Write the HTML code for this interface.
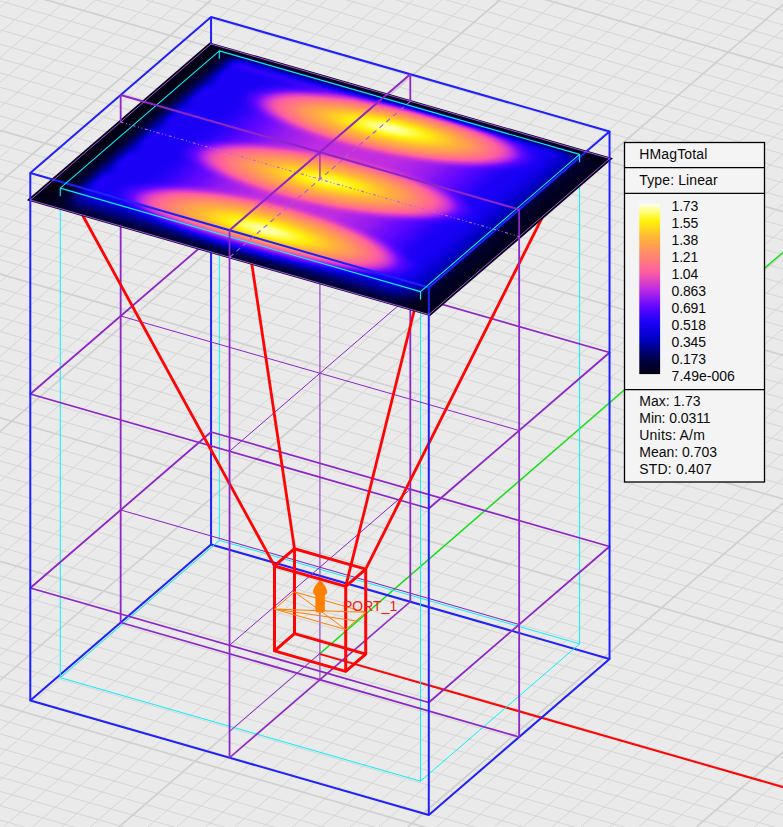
<!DOCTYPE html>
<html lang="en"><head><meta charset="utf-8"><title>HMagTotal field plot</title>
<style>html,body{margin:0;padding:0;background:#eaeaea;overflow:hidden}svg{display:block}text{font-family:"Liberation Sans",Arial,sans-serif}</style></head><body>
<svg width="783" height="827" viewBox="0 0 783 827">
<defs>
<radialGradient id="gl" cx="0.5" cy="0.5" r="0.5"><stop offset="0" stop-color="#fff" stop-opacity="1"/><stop offset="0.13" stop-color="#fff" stop-opacity="0.9"/><stop offset="0.26" stop-color="#fff" stop-opacity="0.77"/><stop offset="0.41" stop-color="#fff" stop-opacity="0.62"/><stop offset="0.56" stop-color="#fff" stop-opacity="0.47"/><stop offset="0.7" stop-color="#fff" stop-opacity="0.31"/><stop offset="0.78" stop-color="#fff" stop-opacity="0.13"/><stop offset="0.85" stop-color="#fff" stop-opacity="0.03"/><stop offset="0.9" stop-color="#fff" stop-opacity="0"/><stop offset="1" stop-color="#fff" stop-opacity="0"/></radialGradient>
<linearGradient id="eL" x1="0" y1="0" x2="1" y2="0"><stop offset="0" stop-color="#000" stop-opacity="1"/><stop offset="0.4" stop-color="#000" stop-opacity="1"/><stop offset="0.54" stop-color="#000" stop-opacity="0.86"/><stop offset="0.67" stop-color="#000" stop-opacity="0.66"/><stop offset="0.79" stop-color="#000" stop-opacity="0.4"/><stop offset="0.9" stop-color="#000" stop-opacity="0.16"/><stop offset="0.97" stop-color="#000" stop-opacity="0.04"/><stop offset="1" stop-color="#000" stop-opacity="0"/></linearGradient>
<linearGradient id="eR" x1="1" y1="0" x2="0" y2="0"><stop offset="0" stop-color="#000" stop-opacity="1"/><stop offset="0.14" stop-color="#000" stop-opacity="1"/><stop offset="0.22" stop-color="#000" stop-opacity="0.92"/><stop offset="0.34" stop-color="#000" stop-opacity="0.87"/><stop offset="0.45" stop-color="#000" stop-opacity="0.8"/><stop offset="0.5" stop-color="#000" stop-opacity="0.55"/><stop offset="0.55" stop-color="#000" stop-opacity="0.4"/><stop offset="0.66" stop-color="#000" stop-opacity="0.3"/><stop offset="0.75" stop-color="#000" stop-opacity="0.17"/><stop offset="0.87" stop-color="#000" stop-opacity="0.05"/><stop offset="1" stop-color="#000" stop-opacity="0"/></linearGradient>
<linearGradient id="eF" x1="0" y1="0" x2="0" y2="1"><stop offset="0" stop-color="#000" stop-opacity="1"/><stop offset="0.1" stop-color="#000" stop-opacity="1"/><stop offset="0.15" stop-color="#000" stop-opacity="0.84"/><stop offset="0.25" stop-color="#000" stop-opacity="0.72"/><stop offset="0.38" stop-color="#000" stop-opacity="0.59"/><stop offset="0.5" stop-color="#000" stop-opacity="0.46"/><stop offset="0.62" stop-color="#000" stop-opacity="0.33"/><stop offset="0.74" stop-color="#000" stop-opacity="0.2"/><stop offset="0.87" stop-color="#000" stop-opacity="0.06"/><stop offset="1" stop-color="#000" stop-opacity="0"/></linearGradient>
<linearGradient id="eB" x1="0" y1="1" x2="0" y2="0"><stop offset="0" stop-color="#000" stop-opacity="1"/><stop offset="0.38" stop-color="#000" stop-opacity="1"/><stop offset="0.51" stop-color="#000" stop-opacity="0.6"/><stop offset="0.64" stop-color="#000" stop-opacity="0.15"/><stop offset="0.83" stop-color="#000" stop-opacity="0"/><stop offset="1" stop-color="#000" stop-opacity="0"/></linearGradient>
<radialGradient id="gs" cx="0.5" cy="0.5" r="0.5"><stop offset="0" stop-color="#fff" stop-opacity="1"/><stop offset="0.5" stop-color="#fff" stop-opacity="0.6"/><stop offset="1" stop-color="#fff" stop-opacity="0"/></radialGradient>
<linearGradient id="gF" gradientUnits="userSpaceOnUse" x1="0" y1="0" x2="1" y2="0"><stop offset="0.17" stop-color="#fff" stop-opacity="0"/><stop offset="0.21" stop-color="#fff" stop-opacity="0.04"/><stop offset="0.26" stop-color="#fff" stop-opacity="0.13"/><stop offset="0.33" stop-color="#fff" stop-opacity="0.22"/><stop offset="0.41" stop-color="#fff" stop-opacity="0.28"/><stop offset="0.51" stop-color="#fff" stop-opacity="0.3"/><stop offset="0.61" stop-color="#fff" stop-opacity="0.28"/><stop offset="0.69" stop-color="#fff" stop-opacity="0.22"/><stop offset="0.76" stop-color="#fff" stop-opacity="0.13"/><stop offset="0.81" stop-color="#fff" stop-opacity="0.04"/><stop offset="0.84" stop-color="#fff" stop-opacity="0"/></linearGradient>
<linearGradient id="gm" gradientUnits="userSpaceOnUse" x1="0" y1="0" x2="0" y2="1"><stop offset="0" stop-color="#fff" stop-opacity="0"/><stop offset="0.09" stop-color="#fff" stop-opacity="0"/><stop offset="0.13" stop-color="#fff" stop-opacity="0.5"/><stop offset="0.17" stop-color="#fff" stop-opacity="1"/><stop offset="0.84" stop-color="#fff" stop-opacity="1"/><stop offset="0.9" stop-color="#fff" stop-opacity="0.6"/><stop offset="0.98" stop-color="#fff" stop-opacity="0"/><stop offset="1" stop-color="#fff" stop-opacity="0"/></linearGradient>
<mask id="mv" maskUnits="userSpaceOnUse" maskContentUnits="userSpaceOnUse" x="-0.2" y="-0.2" width="1.4" height="1.4"><rect x="-0.2" y="-0.2" width="1.4" height="1.4" fill="url(#gm)"/></mask>
<filter id="cm" x="-5%" y="-5%" width="110%" height="110%" color-interpolation-filters="sRGB"><feGaussianBlur stdDeviation="2.2"/><feComponentTransfer><feFuncR type="table" tableValues="0.008 0.005 0.003 0.000 0.000 0.000 0.000 0.000 0.000 0.000 0.000 0.000 0.000 0.003 0.018 0.032 0.047 0.062 0.076 0.091 0.131 0.178 0.225 0.271 0.318 0.364 0.415 0.471 0.527 0.584 0.640 0.697 0.753 0.792 0.830 0.869 0.907 0.946 0.985 1.000 1.000 1.000 1.000 1.000 1.000 1.000 1.000 1.000 1.000 1.000 1.000 1.000 1.000 1.000 1.000 1.000 1.000 1.000 1.000 1.000 1.000 1.000 1.000 1.000 1.000"/><feFuncG type="table" tableValues="0.000 0.000 0.000 0.000 0.000 0.000 0.000 0.000 0.000 0.000 0.000 0.000 0.000 0.000 0.000 0.000 0.000 0.000 0.000 0.000 0.004 0.009 0.014 0.019 0.024 0.028 0.040 0.062 0.084 0.106 0.128 0.150 0.173 0.203 0.234 0.264 0.295 0.326 0.356 0.384 0.410 0.436 0.461 0.487 0.513 0.539 0.566 0.593 0.620 0.647 0.674 0.700 0.736 0.774 0.812 0.850 0.888 0.926 0.955 0.971 0.987 1.000 1.000 1.000 1.000"/><feFuncB type="table" tableValues="0.078 0.108 0.137 0.167 0.212 0.261 0.310 0.369 0.435 0.501 0.568 0.634 0.700 0.760 0.793 0.826 0.859 0.892 0.925 0.958 0.969 0.975 0.980 0.986 0.991 0.997 0.993 0.975 0.957 0.940 0.922 0.904 0.886 0.846 0.805 0.765 0.725 0.684 0.644 0.608 0.576 0.545 0.513 0.481 0.449 0.417 0.387 0.356 0.325 0.295 0.264 0.234 0.204 0.175 0.145 0.116 0.086 0.057 0.088 0.211 0.333 0.464 0.625 0.787 0.949"/><feFuncA type="linear" slope="0" intercept="1"/></feComponentTransfer></filter>
<clipPath id="pc"><path d="M26.82 200.25L430.11 316.12L613.03 158.25L209.74 42.38Z"/></clipPath>
<linearGradient id="cb" x1="0" y1="0" x2="0" y2="1"><stop offset="0" stop-color="rgb(255,255,242)"/><stop offset="0.05" stop-color="rgb(255,255,110)"/><stop offset="0.1" stop-color="rgb(255,242,10)"/><stop offset="0.2" stop-color="rgb(255,180,58)"/><stop offset="0.3" stop-color="rgb(255,136,108)"/><stop offset="0.4" stop-color="rgb(255,94,160)"/><stop offset="0.5" stop-color="rgb(192,44,226)"/><stop offset="0.6" stop-color="rgb(100,8,255)"/><stop offset="0.7" stop-color="rgb(24,0,246)"/><stop offset="0.8" stop-color="rgb(0,0,192)"/><stop offset="0.9" stop-color="rgb(0,0,84)"/><stop offset="0.95" stop-color="rgb(0,0,44)"/><stop offset="1" stop-color="rgb(2,0,20)"/></linearGradient>
</defs>
<rect width="783" height="827" fill="#eaeaea"/>
<path d="M0 -214.54L783 10.41M0 -200.17L783 24.78M0 -185.8L783 39.15M0 -171.43L783 53.52M0 -142.69L783 82.26M0 -128.32L783 96.63M0 -113.95L783 111M0 -99.58L783 125.37M0 -85.21L783 139.74M0 -70.84L783 154.11M0 -56.47L783 168.48M0 -42.1L783 182.85M0 -27.73L783 197.22M0 1.01L783 225.96M0 15.38L783 240.33M0 29.75L783 254.7M0 44.12L783 269.07M0 58.49L783 283.44M0 72.86L783 297.81M0 87.23L783 312.18M0 101.6L783 326.55M0 115.97L783 340.92M0 144.71L783 369.66M0 159.08L783 384.03M0 173.45L783 398.4M0 187.82L783 412.77M0 202.19L783 427.14M0 216.56L783 441.51M0 230.93L783 455.88M0 245.3L783 470.25M0 259.67L783 484.62M0 288.41L783 513.36M0 302.78L783 527.73M0 317.15L783 542.1M0 331.52L783 556.47M0 345.89L783 570.84M0 360.26L783 585.21M0 374.63L783 599.58M0 389L783 613.95M0 403.37L783 628.32M0 432.11L783 657.06M0 446.48L783 671.43M0 460.85L783 685.8M0 475.22L783 700.17M0 489.59L783 714.54M0 503.96L783 728.91M0 518.33L783 743.28M0 532.7L783 757.65M0 547.07L783 772.02M0 575.81L783 800.76M0 590.18L783 815.13M0 604.55L783 829.5M0 618.92L783 843.87M0 633.29L783 858.24M0 647.66L783 872.61M0 662.03L783 886.98M0 676.4L783 901.35M0 690.77L783 915.72M0 719.51L783 944.46M0 733.88L783 958.83M0 748.25L783 973.2M0 762.62L783 987.57M0 776.99L783 1001.94M0 791.36L783 1016.31M0 805.73L783 1030.68M0 820.1L783 1045.05M8.95 0L-949.23 827M37.82 0L-920.36 827M66.69 0L-891.49 827M95.56 0L-862.62 827M124.43 0L-833.75 827M153.3 0L-804.88 827M182.17 0L-776.01 827M239.91 0L-718.27 827M268.78 0L-689.4 827M297.65 0L-660.53 827M326.52 0L-631.66 827M355.39 0L-602.79 827M384.26 0L-573.92 827M413.13 0L-545.05 827M442 0L-516.18 827M470.87 0L-487.31 827M528.61 0L-429.57 827M557.48 0L-400.7 827M586.35 0L-371.83 827M615.22 0L-342.96 827M644.09 0L-314.09 827M672.96 0L-285.22 827M701.83 0L-256.35 827M730.7 0L-227.48 827M759.57 0L-198.61 827M817.31 0L-140.87 827M846.18 0L-112 827M875.05 0L-83.13 827M903.92 0L-54.26 827M932.79 0L-25.39 827M961.66 0L3.48 827M990.53 0L32.35 827M1019.4 0L61.22 827M1048.27 0L90.09 827M1106.01 0L147.83 827M1134.88 0L176.7 827M1163.75 0L205.57 827M1192.62 0L234.44 827M1221.49 0L263.31 827M1250.36 0L292.18 827M1279.23 0L321.05 827M1308.1 0L349.92 827M1336.97 0L378.79 827M1394.71 0L436.53 827M1423.58 0L465.4 827M1452.45 0L494.27 827M1481.32 0L523.14 827M1510.19 0L552.01 827M1539.06 0L580.88 827M1567.93 0L609.75 827M1596.8 0L638.62 827M1625.67 0L667.49 827M1683.41 0L725.23 827M1712.28 0L754.1 827M1741.15 0L782.97 827" stroke="#d6d6d6" stroke-width="1" fill="none"/>
<path d="M0 -157.06L783 67.89M0 -13.36L783 211.59M0 130.34L783 355.29M0 274.04L783 498.99M0 417.74L783 642.69M0 561.44L783 786.39M0 705.14L783 930.09M211.04 0L-747.14 827M499.74 0L-458.44 827M788.44 0L-169.74 827M1077.14 0L118.96 827M1365.84 0L407.66 827M1654.54 0L696.36 827" stroke="#d0d0d0" stroke-width="1.7" fill="none"/>
<path d="M320.1 653.4L788 247.94" stroke="#04e604" stroke-width="1.3" fill="none"/>
<path d="M320.1 654.1L788 788.53" stroke="#ff0404" stroke-width="2" fill="none"/>
<path d="M30.3 700.5L428.8 815L609.55 659L211.05 544.5Z" stroke="#2020fa" stroke-width="2" fill="none" stroke-linejoin="round"/>
<path d="M211.05 44L211.05 544.5" stroke="#2020fa" stroke-width="2" fill="none" stroke-linejoin="round"/>
<path d="M60.27 677.64L420.52 781.14L579.58 643.86L219.33 540.36Z" stroke="#04f2fc" stroke-width="1" fill="none" stroke-linejoin="round"/>
<path d="M60.27 196.14L60.27 677.64" stroke="#04f2fc" stroke-width="1" fill="none" stroke-linejoin="round"/>
<path d="M420.52 299.64L420.52 781.14" stroke="#04f2fc" stroke-width="1" fill="none" stroke-linejoin="round"/>
<path d="M579.58 162.36L579.58 643.86" stroke="#04f2fc" stroke-width="1" fill="none" stroke-linejoin="round"/>
<path d="M219.33 58.86L219.33 540.36" stroke="#04f2fc" stroke-width="1" fill="none" stroke-linejoin="round"/>
<path d="M30.3 394L428.8 508.5L609.55 352.5L211.05 238Z" stroke="#8c26c8" stroke-width="1.8" fill="none" stroke-linejoin="round"/>
<path d="M120.67 316L519.17 430.5" stroke="#8c26c8" stroke-width="1" fill="none" stroke-linejoin="round"/>
<path d="M229.55 451.25L410.3 295.25" stroke="#8c26c8" stroke-width="1" fill="none" stroke-linejoin="round"/>
<path d="M30.3 588L428.8 702.5L609.55 546.5L211.05 432Z" stroke="#8c26c8" stroke-width="1.8" fill="none" stroke-linejoin="round"/>
<path d="M120.67 510L519.17 624.5" stroke="#8c26c8" stroke-width="1" fill="none" stroke-linejoin="round"/>
<path d="M229.55 645.25L410.3 489.25" stroke="#8c26c8" stroke-width="1" fill="none" stroke-linejoin="round"/>
<path d="M120.67 622.5L519.17 737" stroke="#8c26c8" stroke-width="1.8" fill="none" stroke-linejoin="round"/>
<path d="M229.55 757.75L410.3 601.75" stroke="#8c26c8" stroke-width="1.6" fill="none" stroke-linejoin="round"/>
<path d="M229.55 731.45L319.93 653.45" stroke="#8c26c8" stroke-width="1" fill="none" stroke-linejoin="round"/>
<path d="M120.67 122L120.67 622.5" stroke="#8c26c8" stroke-width="1.8" fill="none" stroke-linejoin="round"/>
<path d="M410.3 101.25L410.3 601.75" stroke="#8c26c8" stroke-width="1.8" fill="none" stroke-linejoin="round"/>
<path d="M319.93 179.25L319.93 679.75" stroke="#8c26c8" stroke-width="1" fill="none" stroke-linejoin="round"/>
<path d="M274.49 650.92L345.71 671.39L365.71 654.14L294.49 633.68Z" stroke="#ff0404" stroke-width="3" fill="none" stroke-linejoin="round"/>
<path d="M274.49 565.94L345.71 586.4L365.71 569.16L294.49 548.69Z" stroke="#ff0404" stroke-width="3" fill="none" stroke-linejoin="round"/>
<path d="M274.49 650.92L274.49 565.94" stroke="#ff0404" stroke-width="3" fill="none" stroke-linejoin="round"/>
<path d="M345.71 671.39L345.71 586.4" stroke="#ff0404" stroke-width="3" fill="none" stroke-linejoin="round"/>
<path d="M365.71 654.14L365.71 569.16" stroke="#ff0404" stroke-width="3" fill="none" stroke-linejoin="round"/>
<path d="M294.49 633.68L294.49 548.69" stroke="#ff0404" stroke-width="3" fill="none" stroke-linejoin="round"/>
<path d="M274.49 565.94L74.26 199.99" stroke="#ff0404" stroke-width="2.8" fill="none" stroke-linejoin="round"/>
<path d="M345.71 586.4L417.19 298.52" stroke="#ff0404" stroke-width="2.8" fill="none" stroke-linejoin="round"/>
<path d="M365.71 569.16L565.94 170.23" stroke="#ff0404" stroke-width="2.8" fill="none" stroke-linejoin="round"/>
<path d="M294.49 548.69L223.01 71.71" stroke="#ff0404" stroke-width="2.8" fill="none" stroke-linejoin="round"/>
<path d="M74.26 199.99L417.19 298.52L565.94 170.23L223.01 71.71Z" stroke="#ff0404" stroke-width="2.6" fill="none" stroke-linejoin="round"/>
<path d="M274.49 609.08L345.71 629.55L365.71 612.3L294.49 591.83ZM274.49 609.08L365.71 612.3M345.71 629.55L294.49 591.83M274.49 609.08L355.71 620.92" stroke="#ff8000" stroke-width="1" fill="none"/>
<path d="M320.1 580.2C323 582.5 326.6 587 327.1 591.5L327.1 593L324.85 595.5L324.85 610.5Q324.85 612.5 322.5 612.5L317.7 612.5Q315.35 612.5 315.35 610.5L315.35 595.5L313.1 593L313.1 591.5C313.6 587 317.2 582.5 320.1 580.2Z" fill="#ff8000"/>
<text x="343" y="610.5" font-size="14" fill="#f51a1a">PORT_1</text>
<g clip-path="url(#pc)"><g filter="url(#cm)"><rect x="0" y="20" width="650" height="320" fill="#000"/><g transform="matrix(398.5 114.5 180.75 -156 30.3 200)"><rect x="-0.02" y="-0.02" width="1.04" height="1.04" fill="#fff" opacity="0.3"/><path d="M0.088 0.14V0.93" stroke="#fff" stroke-opacity="0.09" stroke-width="0.016" stroke-dasharray="0.09 0.05" fill="none"/><path d="M0.07 0.935H0.40" stroke="#fff" stroke-opacity="0.08" stroke-width="0.02" fill="none"/><g transform="matrix(1 0.1 0 1 0 -0.05)"><g mask="url(#mv)"><rect x="0" y="-0.1" width="1" height="1.2" fill="url(#gF)"/></g></g><g transform="matrix(1 0.02 0 1 0 -0.01)"><ellipse cx="0.51" cy="0.18" rx="0.42" ry="0.17" fill="url(#gl)" opacity="1"/></g><g transform="matrix(1 0.1 0 1 0 -0.05)"><ellipse cx="0.52" cy="0.5" rx="0.4" ry="0.16" fill="url(#gl)" opacity="0.93"/></g><g transform="matrix(1 0.1 0 1 0 -0.05)"><ellipse cx="0.52" cy="0.84" rx="0.4" ry="0.16" fill="url(#gl)" opacity="1"/></g><rect x="-0.02" y="-0.02" width="0.12" height="1.04" fill="url(#eL)"/><rect x="0.86" y="-0.02" width="0.16" height="1.04" fill="url(#eR)"/><rect x="-0.02" y="-0.02" width="1.04" height="0.16" fill="url(#eF)"/><rect x="-0.02" y="0.93" width="1.04" height="0.09" fill="url(#eB)"/></g></g></g>
<path d="M30.3 173L428.8 287.5L609.55 131.5L211.05 17Z" stroke="#2020fa" stroke-width="2" fill="none" stroke-linejoin="round"/>
<path d="M211.05 17L211.05 44" stroke="#2020fa" stroke-width="2" fill="none" stroke-linejoin="round"/>
<path d="M30.3 173L30.3 700.5" stroke="#2020fa" stroke-width="2" fill="none" stroke-linejoin="round"/>
<path d="M428.8 287.5L428.8 815" stroke="#2020fa" stroke-width="2" fill="none" stroke-linejoin="round"/>
<path d="M609.55 131.5L609.55 659" stroke="#2020fa" stroke-width="2" fill="none" stroke-linejoin="round"/>
<path d="M60.27 188.14L60.27 196.14" stroke="#04f2fc" stroke-width="1.1" fill="none" stroke-linejoin="round"/>
<path d="M420.52 291.64L420.52 299.64" stroke="#04f2fc" stroke-width="1.1" fill="none" stroke-linejoin="round"/>
<path d="M579.58 154.36L579.58 162.36" stroke="#04f2fc" stroke-width="1.1" fill="none" stroke-linejoin="round"/>
<path d="M219.33 50.86L219.33 58.86" stroke="#04f2fc" stroke-width="1.1" fill="none" stroke-linejoin="round"/>
<path d="M60.27 188.14L420.52 291.64L579.58 154.36L219.33 50.86Z" stroke="#04f2fc" stroke-width="1.1" fill="none" stroke-linejoin="round"/>
<path d="M120.67 95L120.67 122" stroke="#8c26c8" stroke-width="1.8" fill="none" stroke-linejoin="round"/>
<path d="M410.3 74.25L410.3 101.25" stroke="#8c26c8" stroke-width="1.8" fill="none" stroke-linejoin="round"/>
<path d="M319.93 152.25L319.93 179.25" stroke="#8c26c8" stroke-width="1.2" fill="none" stroke-linejoin="round"/>
<path d="M229.55 230.25L229.55 757.75" stroke="#8c26c8" stroke-width="1.8" fill="none" stroke-linejoin="round"/>
<path d="M519.17 209.5L519.17 737" stroke="#8c26c8" stroke-width="1.8" fill="none" stroke-linejoin="round"/>
<path d="M120.67 95L519.17 209.5" stroke="#8c26c8" stroke-width="2" fill="none" stroke-linejoin="round"/>
<path d="M229.55 230.25L410.3 74.25" stroke="#8c26c8" stroke-width="2" fill="none" stroke-linejoin="round"/>
<path d="M30.3 200L428.8 314.5L609.55 158.5L211.05 44Z" stroke="#a452e0" stroke-width="1" fill="none" stroke-linejoin="round"/>
<path d="M120.67 122L519.17 236.5" stroke="#b266ea" stroke-width="1.1" fill="none" stroke-linejoin="round" stroke-dasharray="3 2.5 1 2.5 1 2.5"/>
<path d="M229.55 257.25L410.3 101.25" stroke="#a858e4" stroke-width="1.1" fill="none" stroke-linejoin="round" stroke-dasharray="5 4"/>
<g>
<rect x="624.5" y="142.5" width="140" height="339.5" fill="#f4f4f4" stroke="#000" stroke-width="1.3"/>
<path d="M624.5 167.7H764.5" stroke="#000" stroke-width="1.3"/>
<path d="M624.5 193.3H764.5" stroke="#000" stroke-width="1.3"/>
<path d="M624.5 389.7H764.5" stroke="#000" stroke-width="1.3"/>
<text x="639.3" y="158.6" font-size="14" fill="#0a0a0a" textLength="68" lengthAdjust="spacing">HMagTotal</text>
<text x="639.3" y="184.6" font-size="14" fill="#0a0a0a" textLength="78.4" lengthAdjust="spacing">Type: Linear</text>
<rect x="639.3" y="203.8" width="20.8" height="170.3" fill="url(#cb)"/>
<text x="671.6" y="211.1" font-size="14" fill="#0a0a0a" textLength="26.6" lengthAdjust="spacing">1.73</text>
<text x="671.6" y="228.1" font-size="14" fill="#0a0a0a" textLength="26.6" lengthAdjust="spacing">1.55</text>
<text x="671.6" y="245.1" font-size="14" fill="#0a0a0a" textLength="26.6" lengthAdjust="spacing">1.38</text>
<text x="671.6" y="262.1" font-size="14" fill="#0a0a0a" textLength="26.6" lengthAdjust="spacing">1.21</text>
<text x="671.6" y="279.1" font-size="14" fill="#0a0a0a" textLength="26.6" lengthAdjust="spacing">1.04</text>
<text x="671.6" y="296.1" font-size="14" fill="#0a0a0a" textLength="34.4" lengthAdjust="spacing">0.863</text>
<text x="671.6" y="313.1" font-size="14" fill="#0a0a0a" textLength="34.4" lengthAdjust="spacing">0.691</text>
<text x="671.6" y="330.1" font-size="14" fill="#0a0a0a" textLength="34.4" lengthAdjust="spacing">0.518</text>
<text x="671.6" y="347.1" font-size="14" fill="#0a0a0a" textLength="34.4" lengthAdjust="spacing">0.345</text>
<text x="671.6" y="364.1" font-size="14" fill="#0a0a0a" textLength="34.4" lengthAdjust="spacing">0.173</text>
<text x="671.6" y="381.1" font-size="14" fill="#0a0a0a" textLength="63.3" lengthAdjust="spacing">7.49e-006</text>
<text x="639.3" y="405.6" font-size="14" fill="#0a0a0a" textLength="61.2" lengthAdjust="spacing">Max: 1.73</text>
<text x="639.3" y="422.6" font-size="14" fill="#0a0a0a" textLength="71.3" lengthAdjust="spacing">Min: 0.0311</text>
<text x="639.3" y="439.6" font-size="14" fill="#0a0a0a" textLength="65.5" lengthAdjust="spacing">Units: A/m</text>
<text x="639.3" y="456.6" font-size="14" fill="#0a0a0a" textLength="77.7" lengthAdjust="spacing">Mean: 0.703</text>
<text x="639.3" y="473.6" font-size="14" fill="#0a0a0a" textLength="72.4" lengthAdjust="spacing">STD: 0.407</text>
</g>
</svg></body></html>
